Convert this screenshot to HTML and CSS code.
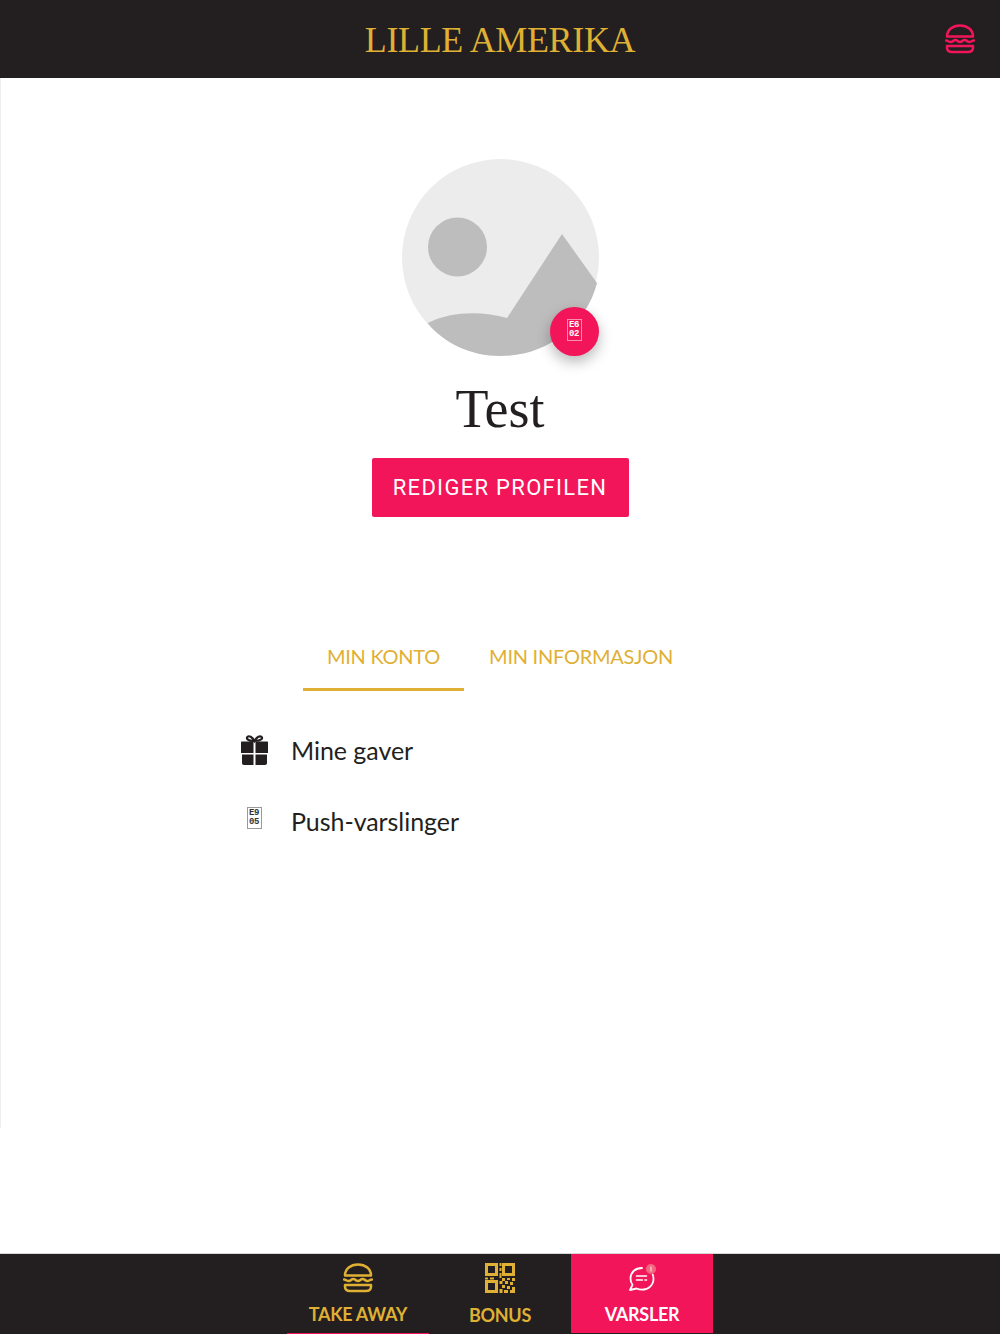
FILE: index.html
```html
<!DOCTYPE html>
<html lang="no">
<head>
  <meta charset="UTF-8" />
  <meta name="viewport" content="width=device-width, initial-scale=1" />
  <title>Lille Amerika</title>
  <link rel="stylesheet" href="styles.css">
</head>
<body>
  <svg class="defs" width="0" height="0">
    <symbol id="burger" viewBox="0 0 30 30">
      <path d="M2 12.500C2 6 7.500 1.500 15 1.500S28 6 28 12.500Z" fill="none" stroke="currentColor" stroke-width="2.500" stroke-linejoin="round"/>
      <path d="M1 16.500c2.300 0 2.300 1.500 4.700 1.500s2.300-2 4.600-2 2.300 2 4.700 2 2.300-2 4.700-2 2.300 2 4.600 2 2.400-1.500 4.700-1.500" fill="none" stroke="currentColor" stroke-width="2.500" stroke-linecap="round"/>
      <path d="M2 22h26v1.500c0 2.800-2 4.500-5 4.500H7c-3 0-5-1.700-5-4.500Z" fill="none" stroke="currentColor" stroke-width="2.500" stroke-linejoin="round"/>
    </symbol>
  </svg>

  <header class="topbar">
    <h1 class="brand">LILLE AMERIKA</h1>
    <svg class="menu-icon"><use href="#burger"/></svg>
  </header>

  <main class="content">
    <div class="profile">
      <div class="avatar">
        <svg class="avatar-img" viewBox="0 0 197 197">
          <circle cx="98.500" cy="98.500" r="98.500" fill="#ececec"/>
          <circle cx="55.500" cy="88" r="29.500" fill="#bdbdbd"/>
          <path d="M25.500 164C50 152 80 152 105 159L160 75 195 124C184 167 145 197 98.500 197 68 197 42 184 25.500 164Z" fill="#bdbdbd"/>
        </svg>
        <div class="avatar-btn"><span class="tofu tofu-light">E6<br>02</span></div>
      </div>
      <h2 class="name">Test</h2>
      <button class="edit-btn">REDIGER PROFILEN</button>
    </div>

    <nav class="tabs">
      <a class="tab active">MIN KONTO</a>
      <a class="tab">MIN INFORMASJON</a>
    </nav>

    <ul class="menu-list">
      <li class="menu-row">
        <span class="row-icon">
          <svg class="gift" viewBox="0 0 27 30">
            <path d="M13.500 6C11 1.500 8 .5 6.500 1.800S6 5.800 13.500 6C21 5.800 22 3 20.500 1.800S16 1.500 13.500 6Z" fill="none" stroke="#231f20" stroke-width="2.200"/>
            <path d="M1 6.500h11.500V18H0V7.500c0-.6.400-1 1-1ZM14.500 6.500H26c.6 0 1 .4 1 1V18H14.500ZM1 19.500h11.500V30H3c-1.200 0-2-.8-2-2ZM14.500 19.500H26V28c0 1.200-.8 2-2 2h-9.500Z" fill="#231f20"/>
          </svg>
        </span>
        Mine gaver
      </li>
      <li class="menu-row">
        <span class="row-icon"><span class="tofu tofu-dark">E9<br>05</span></span>
        Push-varslinger
      </li>
    </ul>
  </main>

  <footer class="bottombar">
    <a class="nav-item selected-line">
      <svg class="nav-icon"><use href="#burger"/></svg>
      <span>TAKE AWAY</span>
    </a>
    <a class="nav-item">
      <svg class="nav-icon qr" viewBox="0 0 30 30">
        <path fill="#dfb033" fill-rule="evenodd" d="M0 0h13v13H0ZM3 3v7h7V3ZM17 0h13v13H17ZM20 3v7h7V3ZM0 17h13v13H0ZM3 20v7h7v-7Z"/>
        <path fill="#dfb033" d="M14.500 0h2v3h-2ZM14.500 5h2v3h-2ZM14.500 10h2v5h-2ZM0 14.500h3v2H0ZM5 14.500h4v2H5ZM17 15h3v3h-3ZM22 15h3v2h-3ZM27 15h3v3h-3ZM14.500 18h3v3h-3ZM20 18h3v3h-3ZM25 19h3v3h-3ZM17 22h3v3h-3ZM22 23h3v3h-3ZM27 24h3v3h-3ZM14.500 26h3v4h-3ZM19 27h4v3h-4ZM25 27h5v3h-5Z"/>
      </svg>
      <span class="bonus-label">BONUS</span>
    </a>
    <a class="nav-item active">
      <svg class="nav-icon chat" viewBox="0 0 30 30">
        <path d="M15 5C8 5 3.500 9.500 3.500 15.500c0 2.500.7 4.500 2 6.300L3 27l6.500-1.500c1.700.8 3.500 1.200 5.500 1.200 6.500 0 11.500-4.700 11.500-11 0-1.500-.3-3-.8-4.200" fill="none" stroke="#fff" stroke-width="1.800" stroke-linecap="round" stroke-linejoin="round"/>
        <path d="M9.500 13h10M9.500 17h6M18 17h1.500" fill="none" stroke="#fff" stroke-width="1.600" stroke-linecap="round"/>
        <circle cx="24" cy="6" r="5" fill="#f3667f"/>
        <path d="M24 3.500v5" stroke="#fbd0d8" stroke-width="1.200"/>
      </svg>
      <span>VARSLER</span>
    </a>
  </footer>
</body>
</html>
```

FILE: styles.css
```css
* { box-sizing: border-box; }

body {
  margin: 0;
  background: #fff;
  color: #231f20;
  font-family: "Lato", "Noto Sans", sans-serif;
  height: 1334px;
  display: flex;
  flex-direction: column;
  overflow: hidden;
}

.defs {
  position: absolute;
}

.topbar {
  height: 78px;
  flex: none;
  background: #231f20;
  display: flex;
  align-items: center;
  justify-content: center;
  position: relative;
  padding-top: 2px;
}

.brand {
  margin: 0;
  font-family: "Liberation Serif", serif;
  font-weight: 400;
  font-size: 36px;
  color: #dfb033;
  letter-spacing: -0.350px;
}

.menu-icon {
  position: absolute;
  right: 25px;
  top: 24px;
  width: 30px;
  height: 30px;
  color: #f3155a;
}

.content {
  flex: 1;
  position: relative;
  padding-top: 81px;
}

.content::before {
  content: "";
  position: absolute;
  left: 0;
  top: 0;
  width: 1px;
  height: 1050px;
  background: #eee;
}

.profile {
  display: flex;
  flex-direction: column;
  align-items: center;
}

.avatar {
  width: 197px;
  height: 197px;
  position: relative;
}

.avatar-img {
  display: block;
  width: 197px;
  height: 197px;
}

.avatar-btn {
  position: absolute;
  right: 0;
  bottom: 0;
  width: 49px;
  height: 49px;
  border-radius: 50%;
  background: #f3155a;
  box-shadow: 0 6px 14px rgba(0, 0, 0, 0.28);
  display: flex;
  align-items: center;
  justify-content: center;
}

.tofu {
  display: block;
  width: 15px;
  height: 22px;
  border: 1px solid #9a9a9a;
  font-family: "Liberation Mono", monospace;
  font-size: 9px;
  font-weight: 700;
  line-height: 9px;
  letter-spacing: -0.500px;
  text-align: center;
  padding-top: 1px;
  color: #333;
}

.tofu-light {
  border-color: #fb8fb0;
  color: #fff;
  margin-top: -3px;
}

.tofu-dark {
  margin-top: -5px;
}

.name {
  margin: 24px 0 0;
  font-family: "Liberation Serif", serif;
  font-weight: 400;
  font-size: 54px;
  line-height: 58px;
  color: #231f20;
}

.edit-btn {
  margin-top: 20px;
  width: 257px;
  height: 59px;
  padding-top: 1px;
  border: none;
  border-radius: 2px;
  background: #f3155a;
  color: #fff;
  font-family: "Roboto", sans-serif;
  font-size: 22px;
  letter-spacing: 1.300px;
}

.tabs {
  margin-top: 112px;
  display: flex;
  justify-content: center;
  gap: 1px;
}

.tab {
  height: 62px;
  padding: 14px 24px 0;
  font-size: 20px;
  line-height: 26px;
  letter-spacing: -0.250px;
  color: #dfb033;
}

.tab.active {
  border-bottom: 3px solid #dfb033;
}

.menu-list {
  list-style: none;
  margin: 23px 0 0 239px;
  padding: 0;
}

.menu-row {
  height: 71px;
  display: flex;
  align-items: center;
  gap: 22px;
  font-size: 25px;
  letter-spacing: -0.050px;
  color: #231f20;
}

.row-icon {
  width: 30px;
  display: flex;
  justify-content: center;
}

.gift {
  width: 27px;
  height: 30px;
}

.bottombar {
  flex: none;
  height: 81px;
  background: #231f20;
  border-top: 1px solid #d8d8d8;
  display: flex;
  justify-content: center;
}

.nav-item {
  width: 142px;
  display: flex;
  flex-direction: column;
  align-items: center;
  font-size: 18px;
  font-weight: 700;
  color: #dfb033;
  padding-top: 9px;
  letter-spacing: -0.300px;
}

.nav-item.active {
  background: #f3155a;
  color: #fff;
  margin-bottom: 1px;
}

.nav-item.selected-line {
  border-bottom: 1px solid #f3155a;
}

.nav-icon {
  width: 30px;
  height: 30px;
  margin-bottom: 10px;
}

.bonus-label {
  margin-top: 1px;
}
```
